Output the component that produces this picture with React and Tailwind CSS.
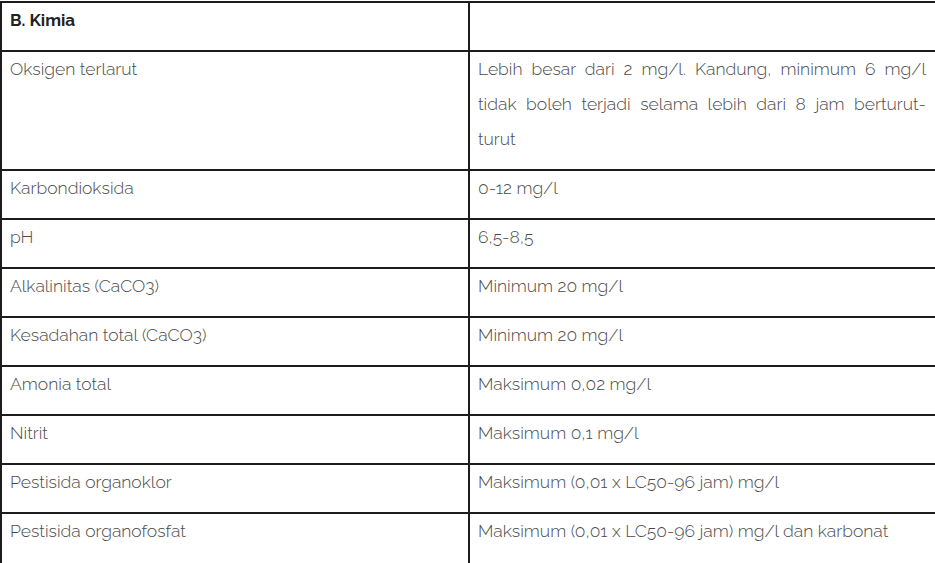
const rows = [
  [
    'Oksigen terlarut',
    <>
      Lebih besar dari 2 mg/l. Kandung, minimum 6 mg/l tidak boleh terjadi selama lebih dari 8 jam berturut-
      <span className="inline-block min-w-[60px]">turut</span>
    </>,
  ],
  ['Karbondioksida', '0-12 mg/l'],
  ['pH', '6,5-8,5'],
  ['Alkalinitas (CaCO3)', 'Minimum 20 mg/l'],
  ['Kesadahan total (CaCO3)', 'Minimum 20 mg/l'],
  ['Amonia total', 'Maksimum 0,02 mg/l'],
  ['Nitrit', 'Maksimum 0,1 mg/l'],
  ['Pestisida organoklor', 'Maksimum (0,01 x LC50-96 jam) mg/l'],
  ['Pestisida organofosfat', 'Maksimum (0,01 x LC50-96 jam) mg/l dan karbonat'],
];

export default function App() {
  return (
    <div className="w-[935px] h-[563px] overflow-hidden bg-white pt-px font-['Raleway','Lato',sans-serif] text-[17.5px] text-[#4a4a4a]">
      <table className="w-[937px] border-collapse table-fixed">
        <colgroup>
          <col className="w-[468px]" />
          <col />
        </colgroup>
        <tbody>
          <tr>
            <td className="border-2 border-[#1c1c1c] align-top pl-[8px] pr-[9px] pt-0 pb-[12px] leading-[35px] font-bold text-[17px] text-[#222]">
              B. Kimia
            </td>
            <td className="border-2 border-[#1c1c1c] align-top pl-[8px] pr-[9px] pt-0 pb-[12px] leading-[35px]"></td>
          </tr>
          {rows.map(([a, b], i) => {
            const last = i === rows.length - 1;
            return (
              <tr key={a}>
                <td className={`border-2 border-[#1c1c1c] align-top pl-[8px] pr-[9px] pt-0 leading-[35px] font-light ${last ? 'pb-[40px]' : 'pb-[12px]'}`}>
                  {a}
                </td>
                <td className={`border-2 border-[#1c1c1c] align-top pl-[8px] pr-[9px] pt-0 leading-[35px] font-light text-justify ${last ? 'pb-[40px]' : 'pb-[12px]'}`}>
                  {b}
                </td>
              </tr>
            );
          })}
        </tbody>
      </table>
    </div>
  );
}
